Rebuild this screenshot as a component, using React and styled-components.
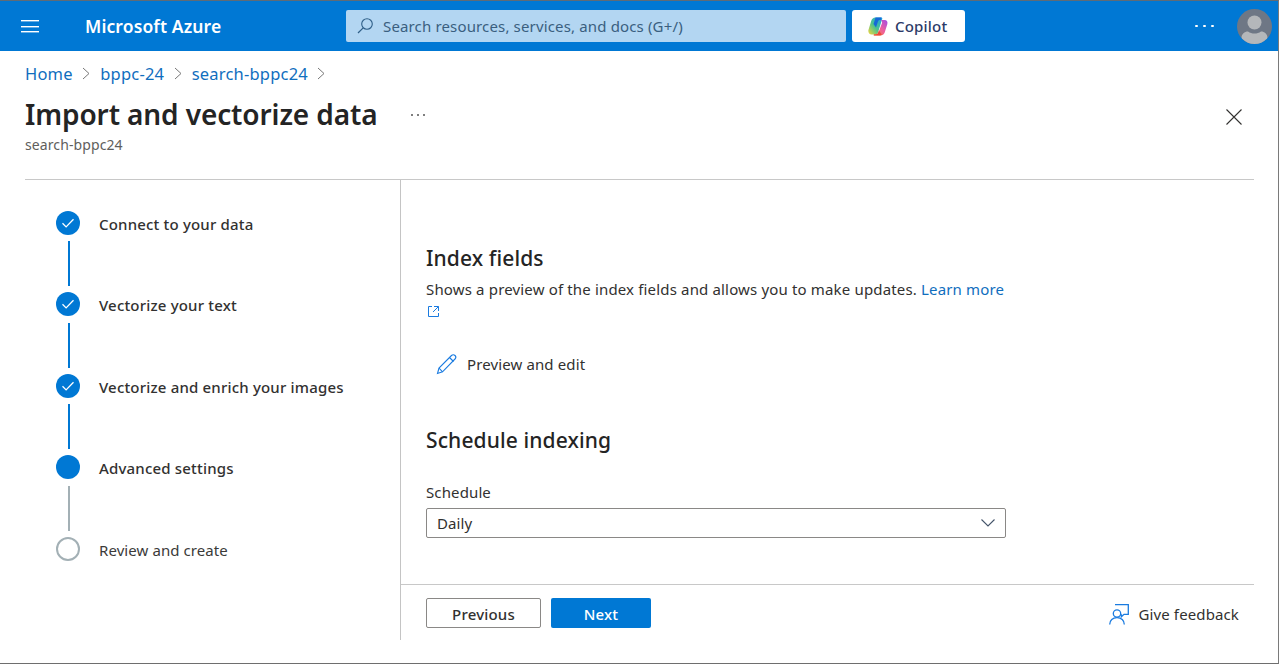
import React from "react";
import styled, { createGlobalStyle } from "styled-components";

const Global = createGlobalStyle`
  html, body { margin: 0; padding: 0; background: #fff; }
  body { font-family: "Noto Sans", "Open Sans", Arial, sans-serif; color: #323130; }
  * { box-sizing: border-box; }
`;

const Window = styled.div`
  width: 1279px; height: 664px; display: flex; flex-direction: column; overflow: hidden;
  border-top: 1px solid #5f6b76; border-right: 1px solid #7a7a7a; border-bottom: 1px solid #6e6e6e;
  background: #fff;
`;
const TopBar = styled.header`
  height: 50px; flex: none; background: #0078d4; display: flex; align-items: center; color: #fff;
`;
const Burger = styled.button`
  width: 20px; height: 14px; margin-left: 20px; padding: 1px; border: 0; background: none; display: flex; flex-direction: column; justify-content: space-between;
  span { display: block; height: 1px; background: #fff; box-shadow: 0 0.4px 0 #fff; }
`;
const Brand = styled.div`
  margin-left: 45px; width: 261px; font-size: 17.5px; font-weight: 600; letter-spacing: 0.12px; white-space: nowrap;
`;
const Search = styled.div`
  width: 500px; height: 32px; background: #b3d6f2; border-radius: 2px; display: flex; align-items: center; padding-left: 9px; gap: 8px;
  color: #3a5f80; font-size: 15px; letter-spacing: 0.15px; white-space: nowrap;
`;
const CopilotBtn = styled.button`
  width: 113px; height: 32px; margin-left: 6px; border: 0; border-radius: 3px; background: #fff; display: flex; align-items: center; padding: 0 0 0 16px; gap: 7px;
  font: 500 15px "Noto Sans", sans-serif; color: #2b3a67; letter-spacing: 0.2px;
`;
const Dots = styled.div`
  margin-left: auto; display: flex; gap: 5.4px; align-items: center; margin-right: 23px;
  span { width: 2.6px; height: 2.6px; border-radius: 50%; background: #fff; }
`;
const Avatar = styled.div`
  width: 35px; height: 35px; margin-right: 6px; margin-top: 1px; border-radius: 50%; overflow: hidden; background: #6e7785; flex: none;
  svg { display: block; }
`;
const Page = styled.main`
  flex: 1; min-height: 0; padding: 0 24px 0 25px; display: flex; flex-direction: column;
`;
const Crumbs = styled.nav`
  height: 20px; margin-top: 12px; display: flex; align-items: center; font-size: 16.5px; letter-spacing: 0.2px; flex: none;
  a { color: #106ebe; text-decoration: none; }
  svg { margin: 0 10px 0 9.5px; }
`;
const Head = styled.div`
  display: flex; margin-top: 12px; height: 70px; flex: none;
`;
const TitleBox = styled.div`
  display: flex; flex-direction: column;
`;
const Title = styled.h1`
  margin: 0; font-size: 28px; line-height: 38px; font-weight: 600; color: #242424; letter-spacing: -0.11px; white-space: nowrap;
`;
const Sub = styled.div`
  font-size: 14px; line-height: 19px; margin-top: 2px; color: #605e5c; letter-spacing: 0.1px;
`;
const Close = styled.div`
  margin-left: auto; margin-right: 10px; margin-top: 12px;
`;
const HeadDots = styled(Dots)`
  margin: 8px 0 0 33px; height: 24px; gap: 4px;
  span { width: 2px; height: 2px; background: #555; }
`;
const Body = styled.div`
  margin-top: 14px; border-top: 1px solid #c8c8c8; display: flex; height: 461px; flex: none;
`;
const Side = styled.aside`
  width: 376px; border-right: 1px solid #c4c4c4; padding: 31px 0 0 31px; flex: none;
`;
const Step = styled.div`
  height: ${p => p.$h}px; display: flex; gap: 19px; align-items: flex-start;
`;
const Rail = styled.div`
  width: 24px; display: flex; flex-direction: column; align-items: center; flex: none;
`;
const Dot = styled.div`
  width: 24px; height: 24px; border-radius: 50%; display: flex; align-items: center; justify-content: center; flex: none;
  background: ${p => (p.$open ? "#fff" : "#0078d4")};
  border: ${p => (p.$open ? "2px solid #a3b0b5" : "0")};
`;
const Line = styled.div`
  width: 2px; height: 45px; margin-top: ${p => p.$gap}px; margin-left: 2px; background: ${p => p.$gray ? "#a3b0b5" : "#0078d4"};
`;
const StepLabel = styled.div`
  font-size: 15px; line-height: 24px; margin-top: 1px; letter-spacing: ${p => p.$bold ? "0.18px" : "0.08px"}; white-space: nowrap; font-weight: ${p => p.$bold ? 500 : 400};
  color: ${p => p.$bold ? "#323130" : "#3b3a39"};
`;
const Right = styled.section`
  flex: 1; display: flex; flex-direction: column; min-width: 0;
`;
const Content = styled.div`
  height: 404px; padding: 64px 0 0 25px; flex: none;
`;
const H2 = styled.h2`
  margin: 0; font-size: 21px; line-height: 28px; font-weight: 500; color: #242424; letter-spacing: 0.12px;
`;
const Para = styled.p`
  margin: 6px 0 0; width: 585px; font-size: 15px; line-height: 22px; color: #323130; letter-spacing: 0.16px;
  a { color: #106ebe; text-decoration: none; }
  svg { display: block; margin: 5px 0 0 1px; }
`;
const EditBtn = styled.div`
  margin: 34px 0 0 10px; display: flex; align-items: center; gap: 9px; font-size: 15px; letter-spacing: 0.12px; height: 24px; color: #323130;
`;
const Schedule = styled(H2)`
  margin-top: 50px;
`;
const FieldLabel = styled.div`
  margin-top: 28px; font-size: 15px; line-height: 20px; letter-spacing: 0.12px; color: #323130;
`;
const Select = styled.div`
  margin-top: 6px; width: 580px; height: 30px; border: 1px solid #8a8886; border-radius: 2px; display: flex; align-items: center; justify-content: space-between;
  padding: 0 10px 0 10px; font-size: 15px; letter-spacing: 0.12px; color: #323130;
`;
const Footer = styled.div`
  border-top: 1px solid #c8c8c8; height: 56px; display: flex; align-items: flex-start; padding: 13px 14px 0 25px;
`;
const Btn = styled.button`
  width: ${p => p.$w}px; height: 30px; border-radius: 2px; margin-right: 10px; font: 500 15px "Noto Sans", sans-serif; letter-spacing: 0.2px; padding: 2px 0 0;
  background: ${p => p.$primary ? "#0078d4" : "#fff"}; color: ${p => p.$primary ? "#fff" : "#323130"};
  border: ${p => p.$primary ? "0" : "1px solid #8a8886"};
`;
const Feedback = styled.div`
  margin-left: auto; margin-top: 5px; margin-right: 1px; display: flex; align-items: center; gap: 10px; font-size: 15px; letter-spacing: 0.12px; color: #323130; height: 22px;
`;

const Chev = () => (
  <svg width="8" height="13" viewBox="0 0 8 13" fill="none"><path d="M1 1l6 5.5L1 12" stroke="#777" strokeWidth="1" /></svg>
);
const Check = () => (
  <svg width="14" height="12" viewBox="0 0 14 12" fill="none"><path d="M1.5 6.3l3.6 3.6 7.4-7.6" stroke="#fff" strokeWidth="1.3" /></svg>
);
const Copilot = () => (
  <svg width="20" height="19" viewBox="0 0 20 19">
    <defs>
      <linearGradient id="cpA" x1="0" y1="1" x2="1" y2="0"><stop offset="0" stopColor="#f5d63c" /><stop offset=".45" stopColor="#4fc38a" /><stop offset="1" stopColor="#1aa0e8" /></linearGradient>
      <linearGradient id="cpB" x1="0" y1="1" x2="1" y2="0"><stop offset="0" stopColor="#f9853c" /><stop offset=".5" stopColor="#ee5f9d" /><stop offset="1" stopColor="#a24be6" /></linearGradient>
    </defs>
    <path d="M7.500.5h5.500c1 0 1.500.6 1.200 1.500L10 15.500c-.5 1.300-1.400 2-2.600 2H3.500C1.200 17.500-.2 15 .5 12.800L3.200 4C3.900 1.900 5.300.5 7.500.5z" fill="url(#cpA)" />
    <path d="M7.500.5h6l-.8 2.500h-1c-1 0-1.400.6-1.800 1.800L8 10.500 5.500 7 7 2.500z" fill="#1668d8" />
    <path d="M12.500 3h4c2.400 0 3.500 2 2.800 4.200l-2.600 8.400c-.7 2.100-2.200 2.900-4.400 2.900H6.800c-.9 0-1.200-.5-.9-1.100 .2-.3 1-.4 2-.4 1.400 0 2.200-.7 2.700-2.100L14 6c.3-1.100-.2-2.400-1.500-3z" fill="url(#cpB)" />
    <path d="M10.800 13.500l-.8 2.300c-.5 1.300-1.200 1.700-2.500 1.700h-1c-.8 0-1 .5-.7 1h5.500c1.200 0 2-.3 2.500-1z" fill="#e8452f" opacity=".85" />
  </svg>
);

const steps = [
  { label: "Connect to your data", h: 81, gap: 6, icon: "check", bold: true },
  { label: "Vectorize your text", h: 82, gap: 7, icon: "check", bold: true },
  { label: "Vectorize and enrich your images", h: 81, gap: 6, icon: "check", bold: true },
  { label: "Advanced settings", h: 82, gap: 7, icon: "fill", bold: true, gray: true },
  { label: "Review and create", h: 30, icon: "open", last: true },
];

export default function App() {
  return (
    <Window>
      <Global />
      <TopBar>
        <Burger aria-label="menu"><span /><span /><span /></Burger>
        <Brand>Microsoft Azure</Brand>
        <Search>
          <svg width="20" height="20" viewBox="0 0 20 20" fill="none"><circle cx="12" cy="8" r="5.3" stroke="#2f5f88" strokeWidth="1.1" /><path d="M8.200 11.800L3 17" stroke="#2f5f88" strokeWidth="1.2" /></svg>
          <span>Search resources, services, and docs (G+/)</span>
        </Search>
        <CopilotBtn><Copilot />Copilot</CopilotBtn>
        <Dots><span /><span /><span /></Dots>
        <Avatar>
          <svg width="35" height="35" viewBox="0 0 35 35"><circle cx="17.5" cy="13.5" r="7" fill="#b4b7ba" /><path d="M4.500 35v-6c0-4 3-6.500 6.500-6.500 2 1.500 4 2 6.500 2s4.500-.5 6.500-2c3.500 0 6.500 2.500 6.500 6.500v6z" fill="#b4b7ba" /></svg>
        </Avatar>
      </TopBar>
      <Page>
        <Crumbs>
          <a>Home</a><Chev /><a>bppc-24</a><Chev /><a>search-bppc24</a><Chev />
        </Crumbs>
        <Head>
          <TitleBox>
            <Title>Import and vectorize data</Title>
            <Sub>search-bppc24</Sub>
          </TitleBox>
          <HeadDots><span /><span /><span /></HeadDots>
          <Close>
            <svg width="20" height="20" viewBox="0 0 20 20" fill="none"><path d="M2.500 2.500l15 15M17.500 2.500l-15 15" stroke="#323130" strokeWidth="1.1" /></svg>
          </Close>
        </Head>
        <Body>
          <Side>
            {steps.map((s) => (
              <Step key={s.label} $h={s.h}>
                <Rail>
                  <Dot $open={s.icon === "open"}>{s.icon === "check" && <Check />}</Dot>
                  {!s.last && <Line $gray={s.gray} $gap={s.gap} />}
                </Rail>
                <StepLabel $bold={s.bold}>{s.label}</StepLabel>
              </Step>
            ))}
          </Side>
          <Right>
            <Content>
              <H2>Index fields</H2>
              <Para>
                Shows a preview of the index fields and allows you to make updates. <a>Learn more</a>
                <svg width="13" height="13" viewBox="0 0 13 13" fill="none" stroke="#1a7be0" strokeWidth="1"><path d="M5 1.500H1.500v10h10V8M7 1.500h4.500V6M11.500 1.500L6 7" /></svg>
              </Para>
              <EditBtn>
                <svg width="22" height="22" viewBox="0 0 22 22" fill="none" stroke="#1a7be0" strokeWidth="1.1"><path d="M1.500 20.500l1.500-5.500L15.500 2.500c1-1 2.500-1 3.500 0s1 2.500 0 3.500L6.500 18.800z" /><path d="M13.500 4.500l4 4M3 15l3.500 3.800" /></svg>
                <span>Preview and edit</span>
              </EditBtn>
              <Schedule>Schedule indexing</Schedule>
              <FieldLabel>Schedule</FieldLabel>
              <Select>
                <span>Daily</span>
                <svg width="14" height="8" viewBox="0 0 14 8" fill="none"><path d="M.5.5L7 7 13.500.5" stroke="#44546a" strokeWidth="1.1" /></svg>
              </Select>
            </Content>
            <Footer>
              <Btn $w={115}>Previous</Btn>
              <Btn $w={100} $primary>Next</Btn>
              <Feedback>
                <svg width="20" height="21" viewBox="0 0 20 21" fill="none" stroke="#1a7be0" strokeWidth="1.3"><path d="M6 .7h13.300v9.600H15l-2.600 2.400v-2.400" /><circle cx="8" cy="9.500" r="3.700" /><path d="M.7 20.500c0-4 3-6.800 7.300-6.800s7.300 2.800 7.300 6.800" /></svg>
                <span>Give feedback</span>
              </Feedback>
            </Footer>
          </Right>
        </Body>
      </Page>
    </Window>
  );
}
